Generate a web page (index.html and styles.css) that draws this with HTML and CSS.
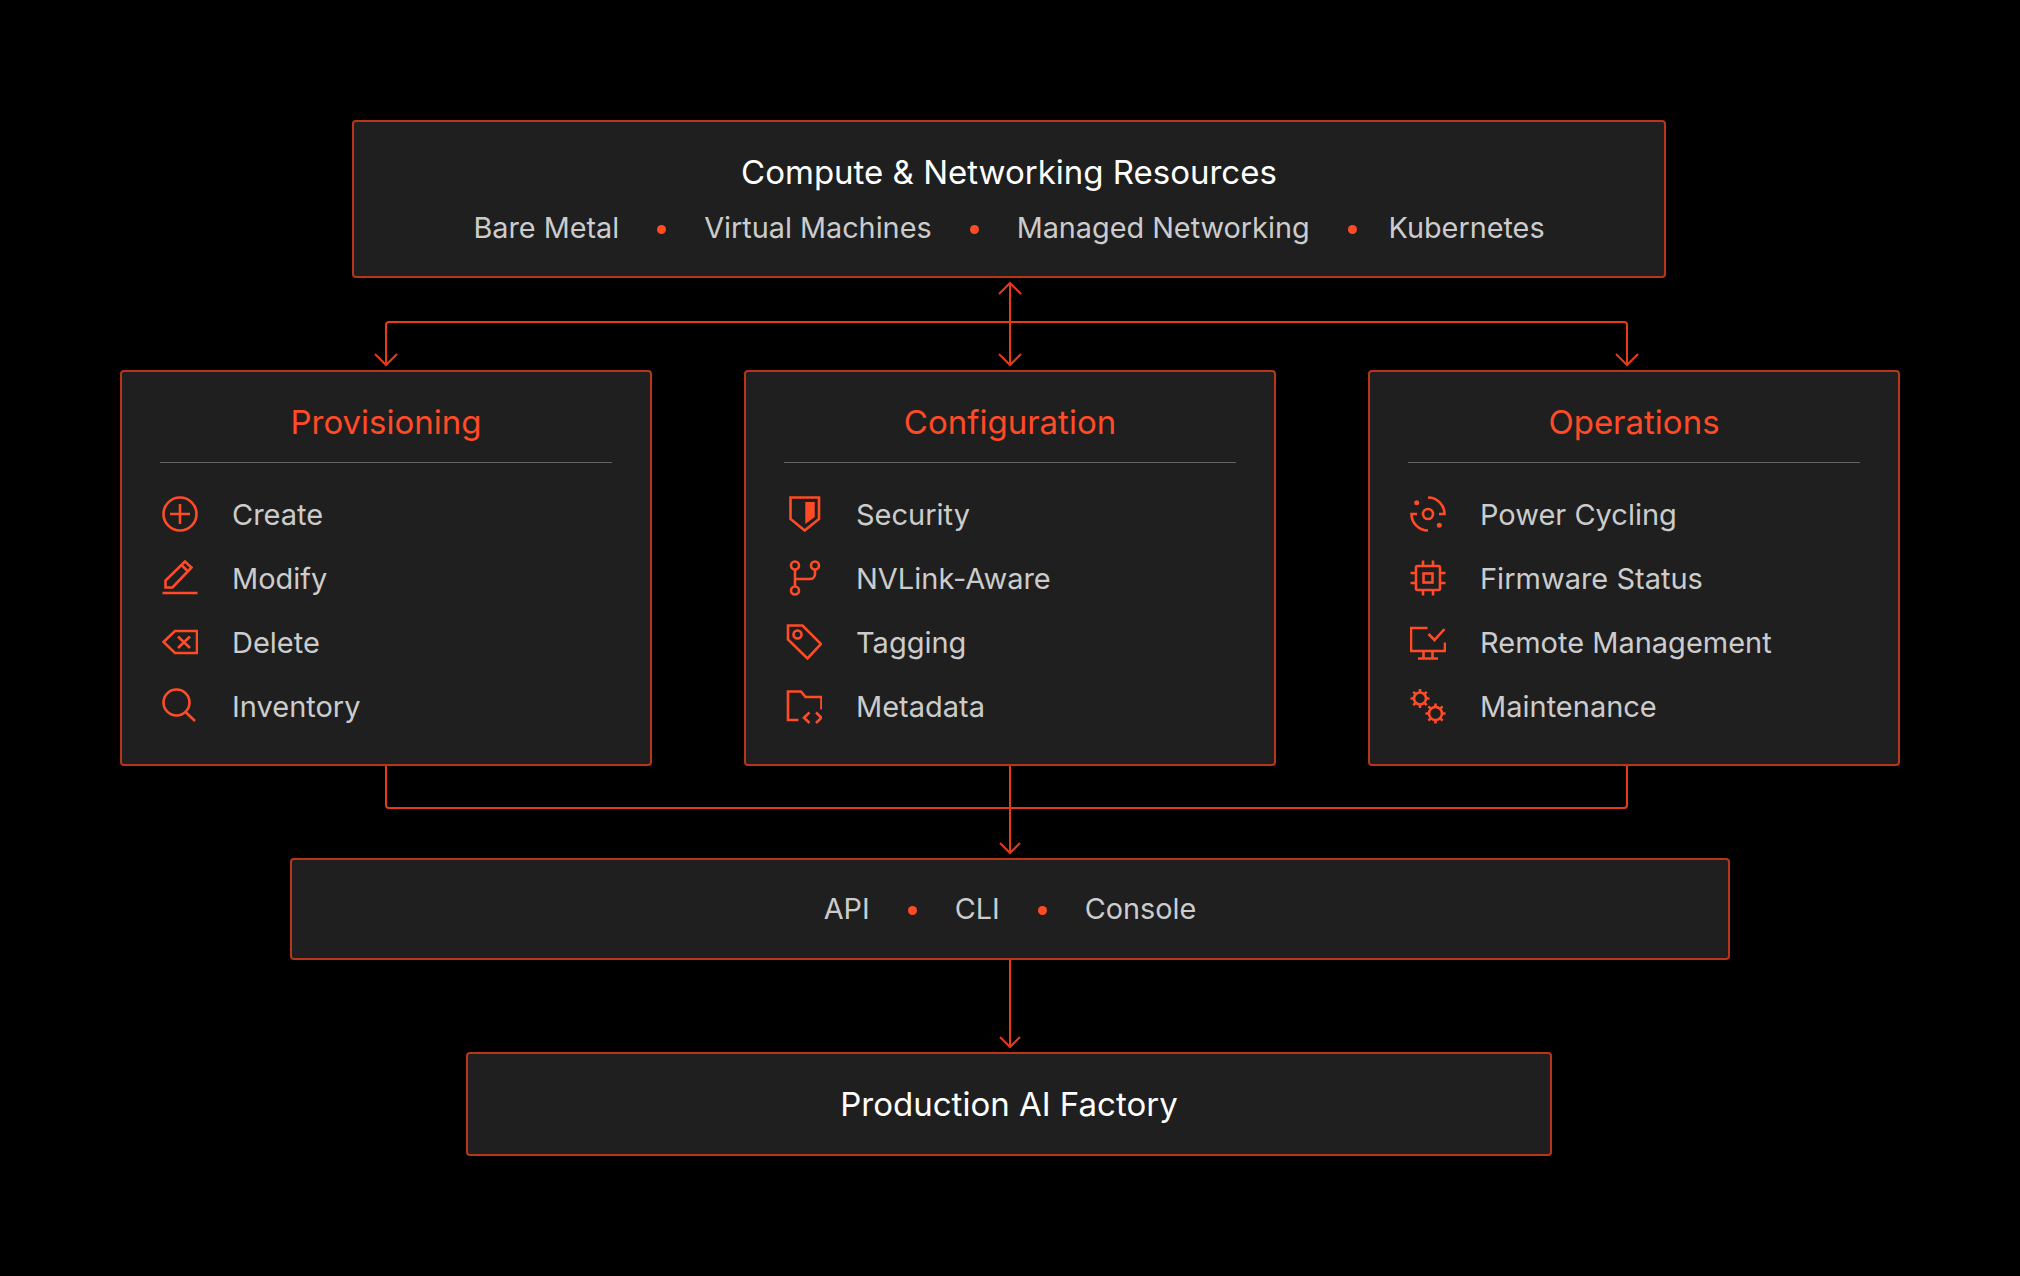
FILE: index.html
```html
<!doctype html>
<html lang="en">
<head>
    <meta charset="utf-8">
    <title>Compute &amp; Networking Resources</title>
    <link rel="stylesheet" href="styles.css">
</head>
<body>
<div class="stage">

    <!--  top box  -->
    <div class="box topBox">
        <p class="boxTitle">Compute &amp; Networking Resources</p>
        <div class="inlineList">
            <span>Bare Metal</span><i class="dot"></i>
            <span>Virtual Machines</span><i class="dot"></i>
            <span>Managed Networking</span><i class="dot dotTight"></i>
            <span>Kubernetes</span>
        </div>
    </div>

    <svg class="link" viewBox="0 0 1780 92">
        <path d="M266 87V47a3 3 0 0 1 3-3H1504a3 3 0 0 1 3 3V87"/>
        <path d="M890 5V87"/>
        <path d="M879 16L890 5L901 16"/>
        <path d="M255 76L266 87L277 76"/>
        <path d="M879 76L890 87L901 76"/>
        <path d="M1496 76L1507 87L1518 76"/>
    </svg>

    <!--  three columns  -->
    <div class="columns">
        <div class="box column">
            <p class="colTitle">Provisioning</p>
            <ul class="colList">
                <li>
                    <svg class="icon" viewBox="0 0 36 36"><circle cx="18" cy="18" r="16.5"/><path d="M8 18H28M18 8V28"/></svg>
                    <span>Create</span>
                </li>
                <li>
                    <svg class="icon" viewBox="0 0 36 36"><path d="M3.5 27.5V20.5L23 1.5L29.5 7.5L10.5 27.5ZM19.5 5L26 11.5M0.5 33H35.5"/></svg>
                    <span>Modify</span>
                </li>
                <li>
                    <svg class="icon" viewBox="0 0 36 36"><path d="M1.5 18L13 7H35V29H13ZM16 12.5L28 24M28 12.5L16 24"/></svg>
                    <span>Delete</span>
                </li>
                <li>
                    <svg class="icon" viewBox="0 0 36 36"><circle cx="14.5" cy="14.5" r="13"/><path d="M23.5 24L33 33"/></svg>
                    <span>Inventory</span>
                </li>
            </ul>
        </div>

        <div class="box column">
            <p class="colTitle">Configuration</p>
            <ul class="colList">
                <li>
                    <svg class="icon" viewBox="0 0 36 36"><path d="M4.5 1.5H33V23L18.7 34.5L4.5 23Z"/><path class="solid" d="M19.3 6H28.7V21L19.3 28Z"/></svg>
                    <span>Security</span>
                </li>
                <li>
                    <svg class="icon" viewBox="0 0 36 36"><circle cx="9" cy="5.5" r="4"/><circle cx="29" cy="5.5" r="4"/><circle cx="9" cy="30.5" r="4"/><path d="M9 9.5V26.5M29 9.5V14a5 5 0 0 1-5 5H9"/></svg>
                    <span>NVLink-Aware</span>
                </li>
                <li>
                    <svg class="icon" viewBox="0 0 36 36"><path d="M2 1.5H16.5L35 20L21.5 34.5L2 15.5Z"/><circle cx="11.5" cy="10.5" r="4"/></svg>
                    <span>Tagging</span>
                </li>
                <li>
                    <svg class="icon" viewBox="0 0 36 36"><path d="M12.5 32H2V3.5H15L19.5 9H35.5V21.5M23.5 24.5L18 29.7L23.5 35M30 24.5L35.5 29.7L30 35"/></svg>
                    <span>Metadata</span>
                </li>
            </ul>
        </div>

        <div class="box column">
            <p class="colTitle">Operations</p>
            <ul class="colList">
                <li>
                    <svg class="icon" viewBox="0 0 36 36"><circle cx="18" cy="18" r="5"/><circle class="solid" cx="6.7" cy="6.7" r="2.5"/><circle class="solid" cx="29.3" cy="29.3" r="2.5"/><path d="M18 1.5A16.5 16.5 0 0 1 34.5 18H29M7 18H1.5A16.5 16.5 0 0 0 18 34.5"/></svg>
                    <span>Power Cycling</span>
                </li>
                <li>
                    <svg class="icon" viewBox="0 0 36 36"><rect x="6" y="6" width="24" height="24" rx="1.5"/><rect x="13.5" y="13.5" width="9" height="9"/><path d="M13 0.5V6M23 0.5V6M13 30V35.5M23 30V35.5M0.5 13H6M0.5 23H6M30 13H35.5M30 23H35.5"/></svg>
                    <span>Firmware Status</span>
                </li>
                <li>
                    <svg class="icon" viewBox="0 0 36 36"><path d="M17.5 4H1V27H35V18.5M18.5 10L24.5 16L34.5 5M13.5 27V34.5M22.5 27V34.5M8 34.5H28"/></svg>
                    <span>Remote Management</span>
                </li>
                <li>
                    <svg class="icon" viewBox="0 0 36 36">
                        <circle cx="10" cy="10.5" r="6"/>
                        <path d="M10 1V4.5M10 16.5V20M0.5 10.5H4M16 10.5H19.5M3.3 3.8L5.8 6.3M14.2 14.7L16.7 17.2M3.3 17.2L5.8 14.7M14.2 6.3L16.7 3.8"/>
                        <circle cx="25.5" cy="25.5" r="6.5"/>
                        <path d="M25.5 15.5V19M25.5 32V35.5M15.5 25.5H19M32 25.5H35.5M18.4 18.4L20.9 20.9M30.1 30.1L32.6 32.6M18.4 32.6L20.9 30.1M30.1 20.9L32.6 18.4"/>
                    </svg>
                    <span>Maintenance</span>
                </li>
            </ul>
        </div>
    </div>

    <svg class="link" viewBox="0 0 1780 92">
        <path d="M266 0V39a3 3 0 0 0 3 3H1504a3 3 0 0 0 3-3V0"/>
        <path d="M890 0V87"/>
        <path d="M880 77L890 87L900 77"/>
    </svg>

    <div class="box apiBox">
        <div class="inlineList">
            <span>API</span><i class="dot"></i>
            <span>CLI</span><i class="dot"></i>
            <span>Console</span>
        </div>
    </div>

    <svg class="link" viewBox="0 0 1780 92">
        <path d="M890 0V87"/>
        <path d="M880 77L890 87L900 77"/>
    </svg>

    <div class="box factoryBox">
        <p class="boxTitle">Production AI Factory</p>
    </div>
</div>
</body>
</html>
```

FILE: styles.css
```css
* {
    margin: 0;
    padding: 0;
    box-sizing: border-box;
}

html, body {
    background: #000;
    font-family: "Inter", "Liberation Sans", sans-serif;
}

ul {
    list-style: none;
}

.stage {
    width: 2020px;
    height: 1276px;
    padding: 120px;
    display: flex;
    flex-direction: column;
    align-items: center;
}

.box {
    background: #1f1f1f;
    border: 2px solid #b8341a;
    border-radius: 4px;
}

.boxTitle {
    font-size: 33px;
    line-height: 40px;
    color: #fff;
    text-align: center;
}

.inlineList {
    display: flex;
    justify-content: center;
    align-items: center;
    gap: 38px;
    font-size: 28.8px;
    line-height: 36px;
    color: #ccc;
}

.dot {
    width: 9px;
    height: 9px;
    margin-top: 2px;
    border-radius: 50%;
    background: #ff4b26;
}

.dotTight {
    margin-right: -6px;
}

.link {
    display: block;
    flex: none;
    width: 1780px;
    height: 92px;
    fill: none;
    stroke: #e63b17;
    stroke-width: 2;
}

.topBox {
    width: 1314px;
    height: 158px;
    padding-top: 30px;
    margin-right: 2px;
}

.topBox .inlineList {
    margin-top: 18px;
}

.columns {
    width: 100%;
    display: flex;
    justify-content: space-between;
}

.column {
    width: 532px;
    height: 396px;
    padding: 30px 38px 0;
}

.colTitle {
    font-size: 33px;
    line-height: 40px;
    color: #ff4b26;
    text-align: center;
    padding-bottom: 20px;
    border-bottom: 1px solid #666;
}

.colList {
    margin-top: 19px;
}

.colList li {
    height: 64px;
    padding-left: 2px;
    display: flex;
    align-items: center;
    gap: 34px;
    font-size: 29px;
    color: #ccc;
}

.icon {
    flex: none;
    width: 36px;
    height: 36px;
    fill: none;
    stroke: #ff4b26;
    stroke-width: 2.6;
}

.icon .solid {
    fill: #ff4b26;
    stroke: none;
}

.apiBox {
    width: 1440px;
    height: 102px;
    display: flex;
    align-items: center;
    justify-content: center;
}

.factoryBox {
    width: 1086px;
    height: 104px;
    margin-right: 2px;
    display: flex;
    align-items: center;
    justify-content: center;
}
```
